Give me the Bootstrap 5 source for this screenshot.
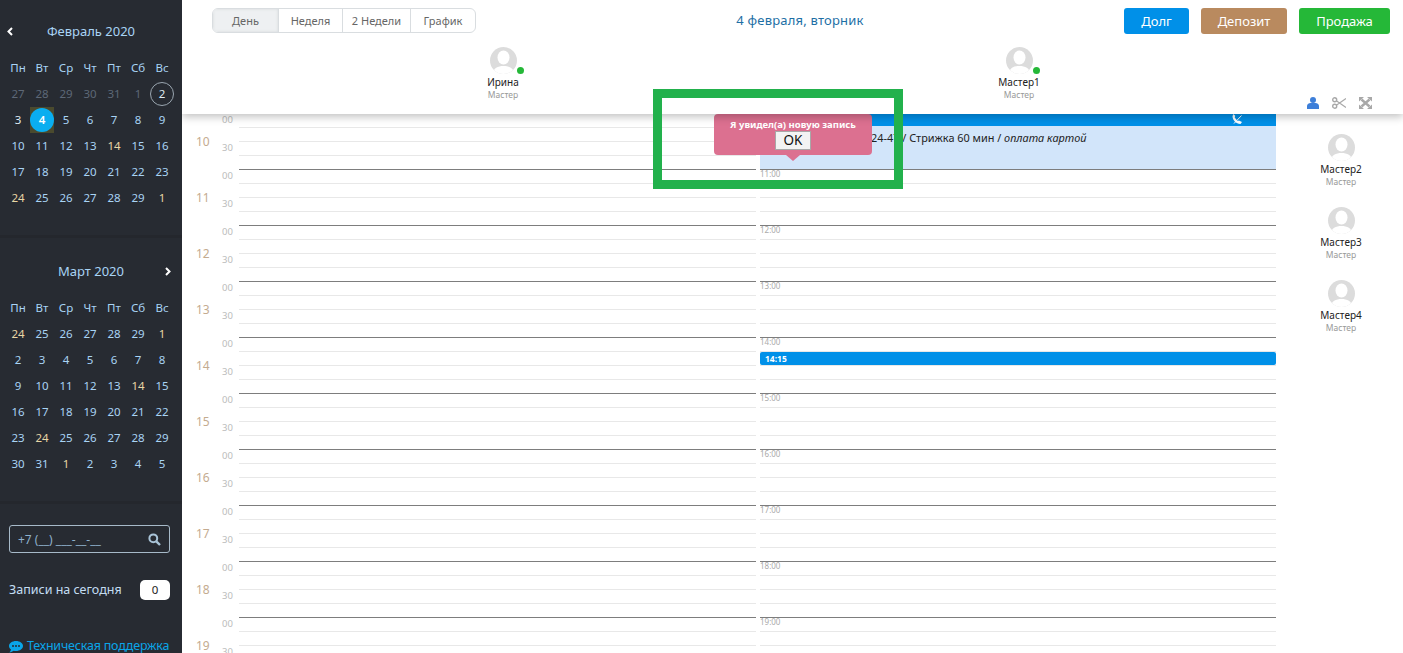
<!DOCTYPE html>
<html lang="ru"><head><meta charset="utf-8">
<link rel="stylesheet" href="https://cdn.jsdelivr.net/npm/bootstrap@5.3.0/dist/css/bootstrap.min.css">
<style>
html,body{height:653px;overflow:hidden}
body{font-family:"Noto Sans","Liberation Sans",sans-serif;background:#fff;font-size:12px}
.shell{height:653px;overflow:hidden}
.side{width:182px;background:#272b32;color:#a9d4f5;flex:none;height:653px;overflow:hidden}
.calbox{height:238px;padding-top:21px;border-bottom:3px solid #24272d}
.calbox2{height:266px;padding-top:23px;border-bottom:3px solid #24272d}
.calhead{height:20px;font-size:13px;line-height:20px;text-align:center;color:#a9d4f5;position:relative;margin-bottom:14px}
.calhead svg{position:absolute;top:6px}
.calgrid{display:grid;grid-template-columns:repeat(7,24px);grid-auto-rows:26px;padding-left:6px;font-size:11.5px;text-align:center;line-height:26px}
.calgrid>div{position:relative}
.dim{color:#5d6877}
.hol{color:#e8d7a5}
.today{background:#4a4a2e;color:#fff}
.today i{position:absolute;left:0;top:1px;width:24px;height:24px;border-radius:50%;background:#0aaef0;font-style:normal;line-height:24px;font-weight:600}
.ring{color:#dfeaf3}
.ring i{position:absolute;left:0;top:1px;width:24px;height:24px;border:1px solid #9aa6b0;border-radius:50%;font-style:normal;line-height:22px}
.searchbox{margin:21px 12px 0 9px;height:28px;border:1px solid #a7bac9;border-radius:3px;padding:0 8px;font-size:12px;color:#8eb0cb;line-height:27px}
.today-row{margin:27px 12px 0 9px;height:20px;font-size:12.5px;color:#c3ddf2;line-height:20px}
.pill{width:30px;height:20px;background:#fff;color:#222;border-radius:5px;text-align:center;font-size:11.5px}
.support{margin:36px 0 0 9px;font-size:12.5px;letter-spacing:-.2px;color:#0aa5e8;white-space:nowrap;line-height:20px}
.mainarea{flex:1;position:relative;height:653px;overflow:hidden;min-width:0}
.head{height:114px;position:relative;z-index:3;background:#fff;box-shadow:0 3px 8px rgba(0,0,0,.24)}
.toprow{padding:8px 13px 0 30px;height:35px}
.seg{width:264px;height:25px;border:1px solid #d9dde0;border-radius:6px;overflow:hidden;font-size:11px;color:#666}
.seg>div{line-height:23px;text-align:center;border-left:1px solid #d9dde0}
.seg>div:first-child{border-left:0;background:#eef0f2;width:65px;box-shadow:inset 0 0 3px #d5d8db}
.seg>div:nth-child(2){width:64px}.seg>div:nth-child(3){width:68px}.seg>div:nth-child(4){flex:1}
.datelabel{flex:1;text-align:center;font-size:13px;color:#1e6fa5;letter-spacing:.2px;line-height:25px}
.acts{gap:12px}
.act{height:26px;border-radius:3px;color:#fff;font-size:13px;line-height:26px;text-align:center}
.a1{width:65px;background:#0090e8}.a2{width:86px;background:#b98a5f}.a3{width:91px;background:#25b838}
.heads{padding-left:63px;margin-top:12px}
.heads>div{width:516px}
.mast{text-align:center;line-height:1;position:relative}
.ava{width:27px;height:27px;display:block;margin:0 auto}
.mname{font-size:10px;color:#222;line-height:14px;margin-top:1px}
.mrole{font-size:8.5px;color:#999;line-height:12px}
.dot{position:absolute;width:7px;height:7px;border-radius:50%;background:#25b838;left:50%;margin-left:14px;top:20px}
.tools{position:absolute;right:31px;top:97px;gap:13px}
.body-wrap{height:539px;position:relative;overflow:hidden}
.hourcol{width:57px;flex:none;position:relative}
.hr-block{height:56px;position:relative}
.bigh{position:absolute;left:14px;top:18px;font-size:12px;color:#c4ab8f;line-height:20px}
.min{position:absolute;left:40px;font-size:9.5px;color:#bbb;line-height:12px}
.m0{top:0}.m3{top:28px}
.gridcols{flex:none;width:1037px;gap:4px}
.cola{flex:none;width:517px;position:relative}
.colb{flex:none;width:516px;position:relative}
.slot{height:56px;border-bottom:1px solid #7d7d7d;background:repeating-linear-gradient(to bottom,transparent 0 13px,#e8e8e8 13px 14px);position:relative}
.slot .tm{position:absolute;left:0;top:55px;font-size:8px;color:#aaa;line-height:10px;z-index:1}
.appt{position:absolute;left:0;right:0;top:0;height:55px;background:#d2e5fa;z-index:2;font-size:10.9px;color:#222}
.apptbar{height:12px;background:#0090e8;position:relative}
.appttext{position:absolute;left:111px;top:16px;white-space:nowrap}
.appt2{position:absolute;left:0;right:0;top:238px;height:13px;background:#0090e8;border-radius:2px;color:#fff;font-size:8.5px;font-weight:700;line-height:13px;padding-left:5px;z-index:2}
.rightlist{width:127px;flex:none;padding-top:20px;padding-left:3px}
.rm{height:73px;text-align:center}
.pop{position:absolute;left:532px;top:114px;width:158px;height:41px;background:#dc7090;border-radius:4px;z-index:2;color:#fff;font-size:9.5px;font-weight:700;text-align:center;padding-top:4px;line-height:13px}
.pop:after{content:"";position:absolute;left:72px;bottom:-6px;border:7px solid transparent;border-top-color:#dc7090;border-bottom:0;border-top-width:6px}
.okbtn{display:block;margin:0 auto;width:36px;height:19px;background:#f3f3f3;border:1px solid #a8a8a8;color:#111;font-size:13.5px;font-weight:400;line-height:17px}
.frame{position:absolute;left:471px;top:89px;width:250px;height:100px;border:9px solid #22b14c;z-index:7}
</style></head>
<body>
<div class="shell d-flex">
<aside class="side">
 <div class="calbox">
  <div class="calhead">Февраль 2020<svg style="left:7px" width="6" height="9" viewBox="0 0 6 9"><path d="M5 1 1.500 4.500 5 8" fill="none" stroke="#fff" stroke-width="2"/></svg></div>
  <div class="calgrid">
   <div>Пн</div><div>Вт</div><div>Ср</div><div>Чт</div><div>Пт</div><div>Сб</div><div>Вс</div>
   <div class="dim">27</div><div class="dim">28</div><div class="dim">29</div><div class="dim">30</div><div class="dim">31</div><div class="dim">1</div><div class="ring"><i>2</i></div>
   <div class="ring">3</div><div class="today"><i>4</i></div><div>5</div><div>6</div><div>7</div><div>8</div><div>9</div>
   <div>10</div><div>11</div><div>12</div><div>13</div><div class="hol">14</div><div>15</div><div>16</div>
   <div>17</div><div>18</div><div>19</div><div>20</div><div>21</div><div>22</div><div>23</div>
   <div class="hol">24</div><div>25</div><div>26</div><div>27</div><div>28</div><div>29</div><div class="hol">1</div>
  </div>
 </div>
 <div class="calbox2">
  <div class="calhead">Март 2020<svg style="right:11px" width="6" height="9" viewBox="0 0 6 9"><path d="M1 1 4.500 4.500 1 8" fill="none" stroke="#fff" stroke-width="2"/></svg></div>
  <div class="calgrid">
   <div>Пн</div><div>Вт</div><div>Ср</div><div>Чт</div><div>Пт</div><div>Сб</div><div>Вс</div>
   <div class="hol">24</div><div>25</div><div>26</div><div>27</div><div>28</div><div>29</div><div class="hol">1</div>
   <div>2</div><div>3</div><div>4</div><div>5</div><div>6</div><div>7</div><div>8</div>
   <div>9</div><div>10</div><div>11</div><div>12</div><div>13</div><div class="hol">14</div><div>15</div>
   <div>16</div><div>17</div><div>18</div><div>19</div><div>20</div><div>21</div><div>22</div>
   <div>23</div><div class="hol">24</div><div>25</div><div>26</div><div>27</div><div>28</div><div>29</div>
   <div>30</div><div>31</div><div class="hol">1</div><div>2</div><div>3</div><div>4</div><div>5</div>
  </div>
 </div>
 <div class="searchbox d-flex justify-content-between align-items-center"><span>+7 (__) ___-__-__</span>
  <svg width="13" height="13" viewBox="0 0 13 13"><circle cx="5.300" cy="5.300" r="3.900" fill="none" stroke="#a9c4d8" stroke-width="2"/><path d="M8.300 8.300 12 12" stroke="#a9c4d8" stroke-width="2.400"/></svg></div>
 <div class="today-row d-flex justify-content-between"><span>Записи на сегодня</span><span class="pill">0</span></div>
 <div class="support"><svg width="14" height="12" viewBox="0 0 14 12" class="me-1"><path d="M7 0C3.100 0 0 2.200 0 5c0 1.400.8 2.600 2 3.500-.1 1-.7 2-1.600 2.900 1.700-.1 3.200-.8 4.300-1.600.7.1 1.500.2 2.300.2 3.900 0 7-2.200 7-5S10.900 0 7 0z" fill="#0aa5e8"/><circle cx="4" cy="5" r="1" fill="#272b32"/><circle cx="7" cy="5" r="1" fill="#272b32"/><circle cx="10" cy="5" r="1" fill="#272b32"/></svg>Техническая поддержка</div>
</aside>
<main class="mainarea">
 <div class="head">
  <div class="toprow d-flex align-items-start">
   <div class="seg d-flex"><div>День</div><div>Неделя</div><div>2 Недели</div><div>График</div></div>
   <div class="datelabel">4 февраля, вторник</div>
   <div class="acts d-flex"><div class="act a1">Долг</div><div class="act a2">Депозит</div><div class="act a3">Продажа</div></div>
  </div>
  <div class="heads d-flex">
   <div class="mast"><svg class="ava" viewBox="0 0 27 27"><use href="#av"/></svg><span class="dot"></span><div class="mname">Ирина</div><div class="mrole">Мастер</div></div>
   <div class="mast"><svg class="ava" viewBox="0 0 27 27"><use href="#av"/></svg><span class="dot"></span><div class="mname">Мастер1</div><div class="mrole">Мастер</div></div>
  </div>
  <div class="tools d-flex align-items-center">
   <svg width="12" height="12" viewBox="0 0 12 12"><circle cx="6" cy="3" r="3" fill="#3d7fd9"/><path d="M0 12V9C0 7 2 6 3.500 6h5C10 6 12 7 12 9v3z" fill="#3d7fd9"/></svg>
   <svg width="14" height="12" viewBox="0 0 14 12"><circle cx="2.700" cy="2.800" r="2" fill="none" stroke="#a8a8a8" stroke-width="1.400"/><circle cx="2.700" cy="9.200" r="2" fill="none" stroke="#a8a8a8" stroke-width="1.400"/><path d="M4.300 3.800 14 10.500M4.300 8.200 14 1.500" stroke="#a8a8a8" stroke-width="1.100"/></svg>
   <svg width="13" height="12" viewBox="0 0 13 12"><path d="M2.500 2.500 10.500 9.500M10.500 2.500 2.500 9.500" stroke="#a8a8a8" stroke-width="2.400"/><path d="M0 0h5L0 4.500zM13 0H8l5 4.500zM0 12h5L0 7.500zM13 12H8l5-4.500z" fill="#a8a8a8"/></svg>
  </div>
 </div>
 <div class="body-wrap d-flex">
  <div class="hourcol" id="hrs"></div>
  <div class="gridcols d-flex">
   <div class="cola" id="ca"></div>
   <div class="colb" id="cb"></div>
  </div>
  <div class="rightlist">
   <div class="rm"><svg class="ava" viewBox="0 0 27 27"><use href="#av"/></svg><div class="mname">Мастер2</div><div class="mrole">Мастер</div></div>
   <div class="rm"><svg class="ava" viewBox="0 0 27 27"><use href="#av"/></svg><div class="mname">Мастер3</div><div class="mrole">Мастер</div></div>
   <div class="rm"><svg class="ava" viewBox="0 0 27 27"><use href="#av"/></svg><div class="mname">Мастер4</div><div class="mrole">Мастер</div></div>
  </div>
 </div>
 <div class="pop">Я увидел(а) новую запись<span class="okbtn">OK</span></div>
 <div class="frame"></div>
</main>
</div>
<svg width="0" height="0" class="position-absolute"><defs><symbol id="av" viewBox="0 0 27 27"><clipPath id="cp"><circle cx="13.500" cy="13.500" r="13.500"/></clipPath><g clip-path="url(#cp)"><rect width="27" height="27" fill="#dcdcdc"/><ellipse cx="13.500" cy="10.500" rx="6" ry="7" fill="#fff"/><path d="M3 27c0-6 5-8 10.500-8S24 21 24 27z" fill="#fff"/></g></symbol></defs></svg>
<script>
const H=[10,11,12,13,14,15,16,17,18,19];
let h='';
H.forEach(x=>{h+=`<div class="hr-block"><span class="min m0">00</span><span class="min m3">30</span><span class="bigh">${x}</span></div>`});
document.getElementById('hrs').innerHTML=h;
function col(b){let s='';H.forEach(x=>{s+=`<div class="slot">${b&&x<19?`<span class="tm">${x+1}:00</span>`:''}</div>`});return s}
document.getElementById('ca').innerHTML=col(false);
document.getElementById('cb').innerHTML=col(true)+`<div class="appt"><div class="apptbar"><svg class="position-absolute" style="right:34px;top:0" width="10" height="10" viewBox="0 0 10 10"><path d="M1.500 0 3.200 1.800 2.700 3.500 5.500 7 7 6.500 10 8 8.500 10C4 10 .5 6 .5 2z" fill="#fff"/><path d="M2 9.500 9.500 1.500" stroke="#fff" stroke-width="1"/></svg></div><div class="appttext">24-47 / Стрижка 60 мин / <em>оплата картой</em></div></div><div class="appt2">14:15</div>`;
</script>
</body></html>
